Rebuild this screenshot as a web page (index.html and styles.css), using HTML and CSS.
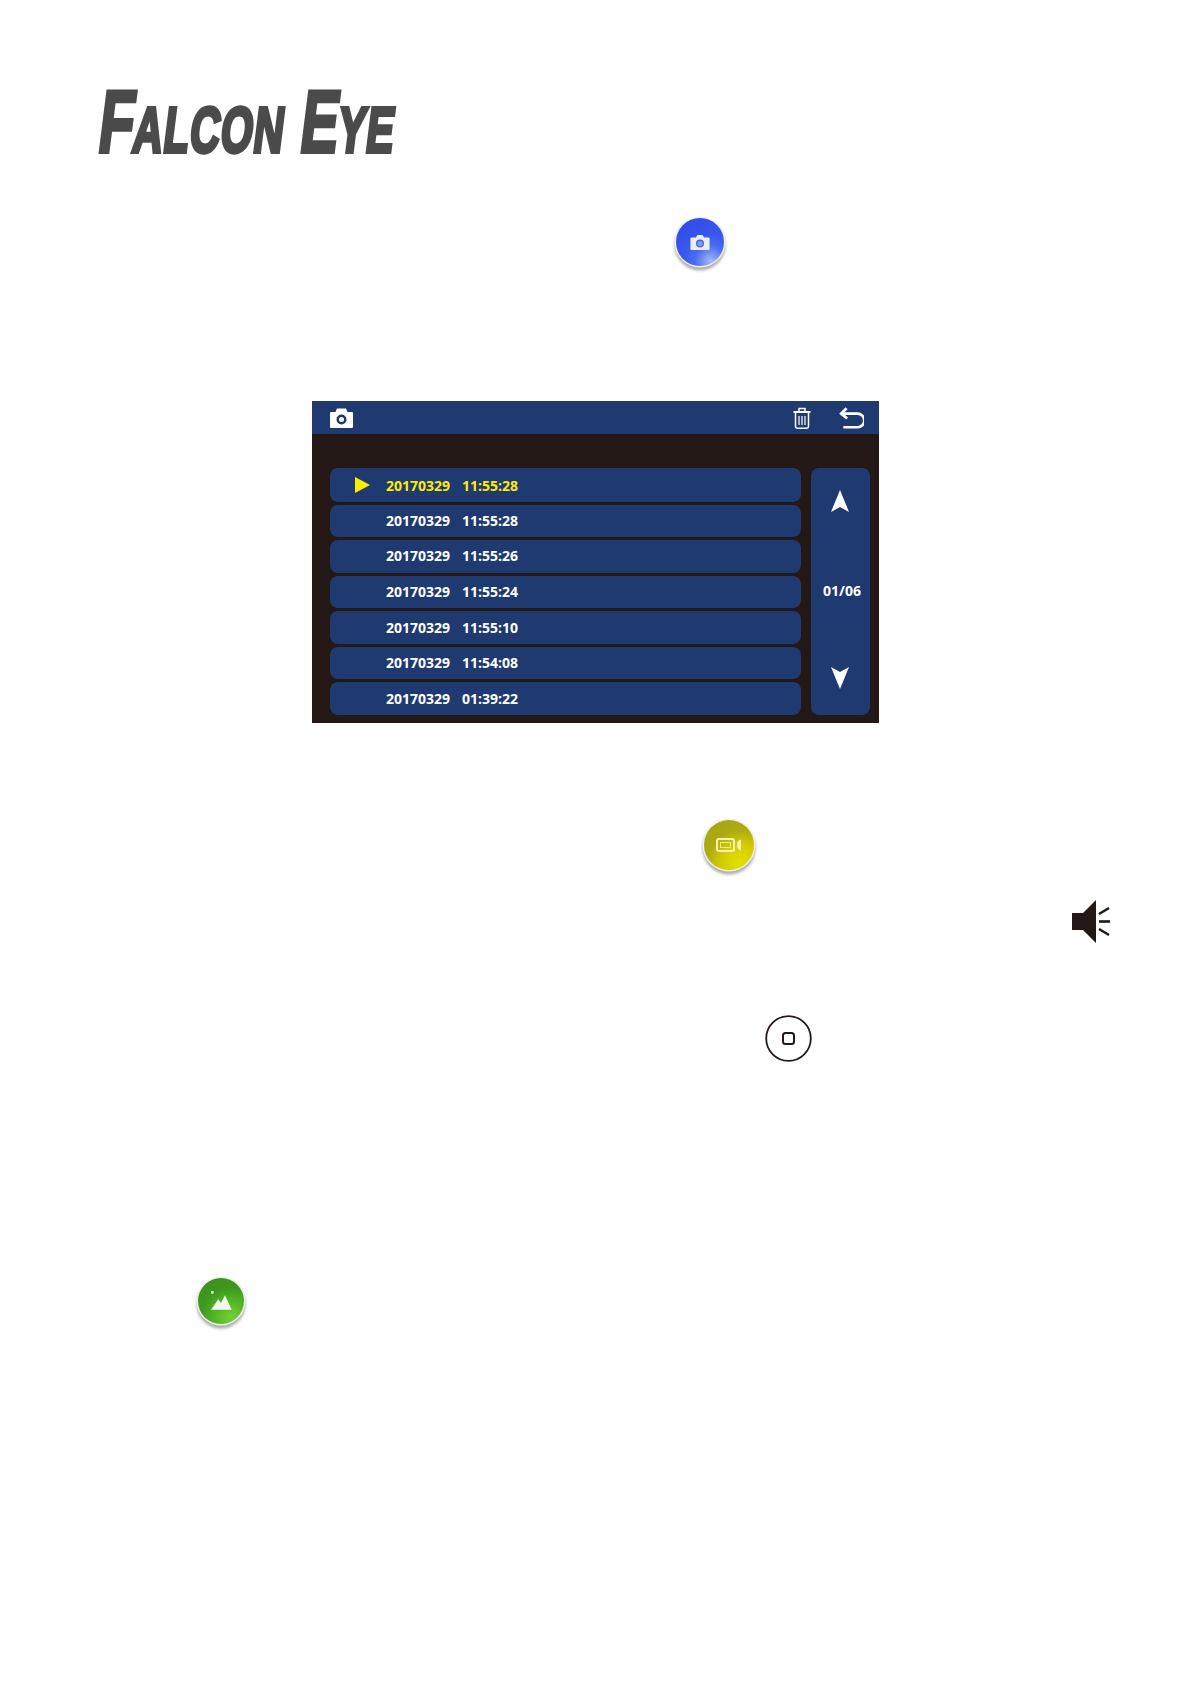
FILE: index.html
```html
<!DOCTYPE html>
<html lang="en">
<head>
<meta charset="utf-8">
<title>Falcon Eye</title>
<link rel="stylesheet" href="styles.css">
</head>
<body>
<main class="page">
  <div class="logo"><span class="cap">F</span><span class="small">ALCON</span><span class="gap"></span><span class="cap">E</span><span class="small">YE</span></div>

  <div class="gloss gloss-blue">
    <svg viewBox="0 0 24 20" width="20" height="17"><path fill="#eaf0fb" fill-rule="evenodd" d="M2 4h5l2-3h6l2 3h5a1.500 1.500 0 0 1 1.500 1.500v12a1.500 1.500 0 0 1-1.500 1.500h-20a1.500 1.500 0 0 1-1.500-1.500v-12a1.500 1.500 0 0 1 1.500-1.500zM12 6.500a4.800 4.800 0 1 0 0 9.600a4.800 4.800 0 1 0 0-9.600z"/><circle cx="12" cy="11.300" r="3.200" fill="#7f9cf0"/></svg>
  </div>

  <section class="screen">
    <header class="bar">
      <svg class="bar-cam" viewBox="0 0 23 20" width="23" height="20"><path fill="#fff" fill-rule="evenodd" d="M1 4h4.500l1.500-3.500h9l1.500 3.500h4.500a1 1 0 0 1 1 1v14a1 1 0 0 1-1 1h-21a1 1 0 0 1-1-1v-14a1 1 0 0 1 1-1zM11.500 6.500a5 5 0 1 0 0 10a5 5 0 1 0 0-10zM11.500 9a2.500 2.500 0 1 1 0 5a2.500 2.500 0 1 1 0-5z"/></svg>
      <svg class="bar-trash" viewBox="0 0 18 22" width="18" height="22"><g fill="none" stroke="#fff" stroke-width="1.500"><path d="M0.500 5h17" stroke-width="2"/><path d="M6 5v-3.500h6v3.500"/><path d="M2.500 5v14.500a1.700 1.700 0 0 0 1.700 1.700h9.600a1.700 1.700 0 0 0 1.700-1.700v-14.500"/><path d="M6 9v9M9 9v9M12 9v9" stroke-width="1.200"/></g></svg>
      <svg class="bar-back" viewBox="0 0 23 20" width="25" height="22"><g fill="none" stroke="#fff" stroke-width="2.500"><path d="M7 1l-5 5l5.500 4.500"/><path d="M2 6h15a5.300 5.300 0 0 1 0 12.500h-13"/></g></svg>
    </header>
    <div class="content">
      <ul class="list">
        <li class="row row-active"><svg class="play" viewBox="0 0 15 16" width="15" height="16"><path fill="#ffec00" d="M0 0l15 8l-15 8z"/></svg><span>20170329</span><span class="time">11:55:28</span></li>
        <li class="row"><span>20170329</span><span class="time">11:55:28</span></li>
        <li class="row"><span>20170329</span><span class="time">11:55:26</span></li>
        <li class="row"><span>20170329</span><span class="time">11:55:24</span></li>
        <li class="row"><span>20170329</span><span class="time">11:55:10</span></li>
        <li class="row"><span>20170329</span><span class="time">11:54:08</span></li>
        <li class="row"><span>20170329</span><span class="time">01:39:22</span></li>
      </ul>
      <aside class="pager">
        <svg viewBox="0 0 18 22" width="18" height="22"><path fill="#fff" d="M9 0l9 22l-9-5l-9 5z"/></svg>
        <span class="count">01/06</span>
        <svg viewBox="0 0 18 22" width="18" height="22"><path fill="#fff" d="M9 22l9-22l-9 5l-9-5z"/></svg>
      </aside>
    </div>
  </section>

  <div class="gloss gloss-yellow">
    <svg viewBox="0 0 26 14" width="26" height="14"><rect x="1" y="1" width="17" height="12" rx="2" fill="none" stroke="#f4f2b8" stroke-width="2"/><rect x="4.500" y="4.500" width="10" height="5" fill="none" stroke="#f4f2b8" stroke-width="0.800"/><path fill="#f4f2b8" d="M25 1.500v11a5.500 5.500 0 0 1-4-5.500a5.500 5.500 0 0 1 4-5.500z"/></svg>
  </div>

  <div class="speaker">
    <svg viewBox="0 0 38 43" width="38" height="43"><path fill="#231815" d="M0 13h11l13-13v43l-13-13h-11z"/><g fill="none" stroke="#231815" stroke-width="2.600"><path d="M27 14l10-6"/><path d="M27 21.500h11"/><path d="M27 29l10 6"/></g></svg>
  </div>

  <div class="home">
    <svg viewBox="0 0 47 47" width="47" height="47"><circle cx="23.500" cy="23.500" r="22.300" fill="none" stroke="#231815" stroke-width="1.800"/><rect x="18" y="18" width="11" height="11" rx="2.500" fill="none" stroke="#231815" stroke-width="2"/></svg>
  </div>

  <div class="gloss gloss-green">
    <svg viewBox="0 0 21 20" width="21" height="20"><path fill="#f3f8ee" d="M0 18.700l7.300-10.400l2.700 3.700l4-7.700l6.700 14.400z"/><circle cx="1.300" cy="1.300" r="1.500" fill="#cfe8c0"/></svg>
  </div>
</main>
</body>
</html>
```
FILE: styles.css
```css
* { box-sizing: border-box; }
html, body { margin: 0; padding: 0; background: #fff; }
.page { min-height: 1684px; padding-top: 90px; font-family: "Open Sans", "Liberation Sans", sans-serif; overflow: hidden; }

.logo {
  margin-left: 96px;
  height: 64px;
  width: 490px;
  display: flex;
  align-items: baseline;
  color: #4b4b4b;
  font-family: "Liberation Sans", sans-serif;
  font-weight: 700;
  line-height: 64px;
  -webkit-text-stroke: 4px #4b4b4b;
  transform-origin: left bottom;
  transform: scaleX(.645) skewX(-11deg);
  white-space: nowrap;
}
.cap { font-size: 88px; }
.small { font-size: 64px; letter-spacing: 1.500px; }
.gap { width: 24px; }

.gloss {
  width: 48px;
  height: 48px;
  border-radius: 50%;
  display: flex;
  align-items: center;
  justify-content: center;
  box-shadow: 0 0 0 1.500px #f1f1e8, 0 3px 3px 1.500px rgba(90,90,90,.5);
}
.gloss-blue {
  margin: 64px 0 0 676px;
  background: radial-gradient(circle at 72% 90%, #a4b8fa 0, #4a6cf2 28%, transparent 50%), linear-gradient(150deg, #2f49e6 0, #3a58ee 55%, #2f4fe0 100%);
}
.gloss-yellow {
  width: 50px;
  height: 50px;
  margin: 97px 0 0 704px;
  background: radial-gradient(circle at 72% 85%, #e6e000 0, #d4cc00 32%, transparent 58%), linear-gradient(150deg, #a3a314 0, #b2ae10 55%, #cfc800 100%);
}
.gloss-green {
  width: 46px;
  height: 46px;
  margin: 216px 0 0 198px;
  background: radial-gradient(circle at 72% 85%, #74d03a 0, #52b526 32%, transparent 58%), linear-gradient(150deg, #3c8f1c 0, #3f9a1e 55%, #48a920 100%);
}

.screen {
  width: 567px;
  height: 322px;
  margin: 135px 0 0 312px;
  background: #231815;
  display: flex;
  flex-direction: column;
}
.bar {
  height: 33px;
  background: #1f3a70;
  display: flex;
  align-items: center;
  flex: none;
  padding: 0 15px 0 18px;
}
.bar-cam { margin-right: auto; }
.bar-trash { margin-right: 28px; }
.content {
  display: flex;
  gap: 10px;
  padding: 34px 8px 8px 18px;
  flex: 1;
  min-height: 0;
}
.list {
  list-style: none;
  margin: 0;
  padding: 0;
  width: 471px;
  display: flex;
  flex-direction: column;
  gap: 3px;
}
.row {
  flex: 1;
  min-height: 0;
  border-radius: 8px;
  background: #1f3a70;
  color: #fff;
  font-size: 14px;
  font-weight: 700;
  display: flex;
  align-items: center;
  padding: 0 0 1px 56px;
  position: relative;
}
.row-active { color: #ffec00; padding: 2px 0 0 56px; }
.play { position: absolute; left: 25px; top: 9px; }
.time { margin-left: 12px; }
.pager {
  width: 59px;
  border-radius: 8px;
  background: #1f3a70;
  display: flex;
  flex-direction: column;
  align-items: center;
  justify-content: space-between;
  padding: 22px 0 26px;
}
.pager svg { margin-right: 2px; }
.count { color: #fff; font-size: 14px; font-weight: 700; padding: 2px 0 0 3px; }

.speaker { margin: 30px 0 0 1072px; height: 43px; }
.speaker svg, .home svg { display: block; }
.home { margin: 72px 0 0 765px; height: 47px; }
```
